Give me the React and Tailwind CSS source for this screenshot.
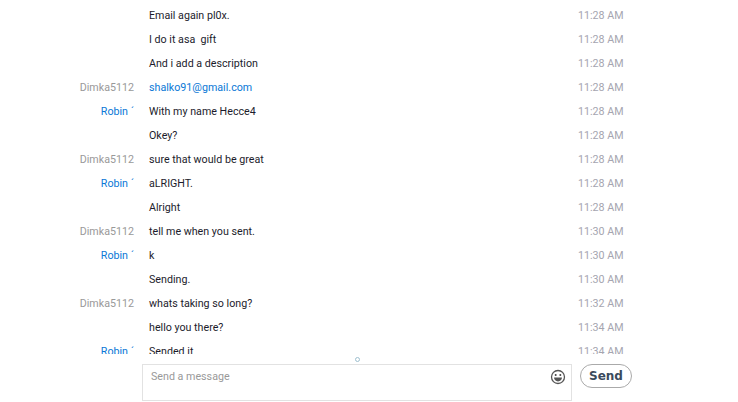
const messages = [
  { text: 'Email again pl0x.', time: '11:28 AM' },
  { text: 'I do it asa\u00a0 gift', time: '11:28 AM' },
  { text: 'And i add a description', time: '11:28 AM' },
  { name: 'Dimka5112', text: 'shalko91@gmail.com', time: '11:28 AM', link: true },
  { name: 'Robin ´', me: true, text: 'With my name Hecce4', time: '11:28 AM' },
  { text: 'Okey?', time: '11:28 AM' },
  { name: 'Dimka5112', text: 'sure that would be great', time: '11:28 AM' },
  { name: 'Robin ´', me: true, text: 'aLRIGHT.', time: '11:28 AM' },
  { text: 'Alright', time: '11:28 AM' },
  { name: 'Dimka5112', text: 'tell me when you sent.', time: '11:30 AM' },
  { name: 'Robin ´', me: true, text: 'k', time: '11:30 AM' },
  { text: 'Sending.', time: '11:30 AM' },
  { name: 'Dimka5112', text: 'whats taking so long?', time: '11:32 AM' },
  { text: 'hello you there?', time: '11:34 AM' },
  { name: 'Robin ´', me: true, text: 'Sended it', time: '11:34 AM' },
];

const Smiley = () => (
  <svg width="16" height="16" viewBox="0 0 16 16" fill="none">
    <circle cx="8" cy="8" r="6.5" stroke="#555" strokeWidth="1.3" />
    <circle cx="5.7" cy="6" r="1" fill="#444" />
    <circle cx="10.3" cy="6" r="1" fill="#444" />
    <path d="M4 8.6h8c0 2.3-1.8 3.8-4 3.8s-4-1.5-4-3.8z" fill="#555" />
  </svg>
);

const App = () => {
  return (
    <div className="w-[738px] h-[402px] bg-white overflow-hidden font-['Roboto',sans-serif] text-[10.7px]">
      <div className="h-[354px] pt-[4px] overflow-hidden">
        {messages.map((msg, index) => (
          <div key={index} className="flex h-6 items-center">
            <div className={`w-[134px] text-right ${msg.me ? 'text-[#0a78d6]' : 'text-[#999]'}`}>{msg.name}</div>
            <div className={`w-[444px] pl-[15px] ${msg.link ? 'text-[#0a78d6]' : 'text-[#1c1c2c]'}`}>{msg.text}</div>
            <div className="text-[#a5a5b0]">{msg.time}</div>
          </div>
        ))}
      </div>
      <div className="relative flex items-start pl-[142px] pt-[10px] gap-2">
        <div className="absolute left-[355px] top-[3px] w-[5px] h-[5px] rounded-full border border-[#9fc0cf]"></div>
        <div className="w-[430px] h-[37px] border border-[#e2e2e2] flex justify-between pl-2 pr-[5px]">
          <span className="text-[#999] mt-[4px]">Send a message</span>
          <div className="mt-[4px]"><Smiley /></div>
        </div>
        <button className="w-[52px] h-6 rounded-full border border-[#aaa] bg-white text-[#3a4a5c] text-[12px] font-bold font-['DejaVu_Sans',sans-serif]">Send</button>
      </div>
    </div>
  );
};

export default App;
